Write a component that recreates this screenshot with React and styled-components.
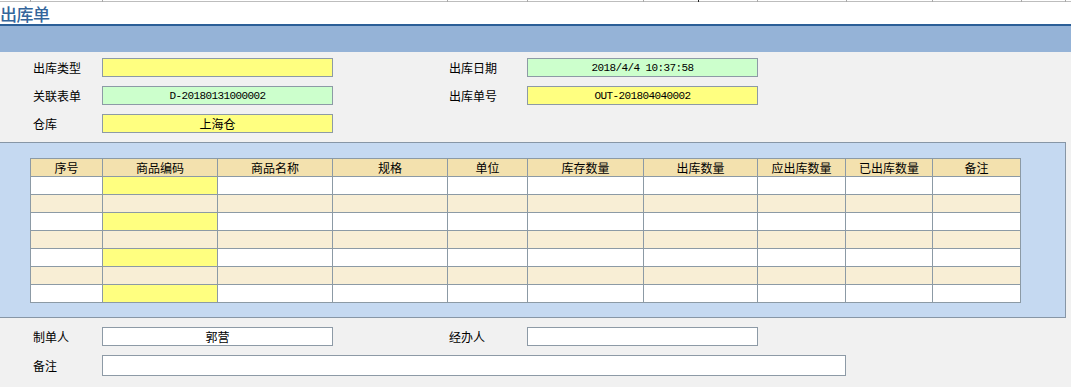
import React from "react";
import styled, { createGlobalStyle } from "styled-components";

const GlobalStyle = createGlobalStyle`
    body {
        margin: 0;
        background: #f1f1f1;
        font-family: "Noto Sans CJK SC", "Liberation Sans", sans-serif;
        font-size: 12px;
        color: #000;
    }
`;

const Page = styled.div`
    width: 1071px;
    height: 387px;
    overflow: hidden;
    background: #f1f1f1;
`;

const Header = styled.div`
    background: #fff;
    border-bottom: 2px solid #2b5f97;
`;

const TopStrip = styled.div`
    position: relative;
    height: 1px;
    border-bottom: 1px solid #bdbdbd;
`;

const Tick = styled.span`
    position: absolute;
    top: 0;
    width: 1px;
    height: 2px;
    background: ${(p) => (p.$dark ? "#222" : "#a8a8a8")};
`;

const Title = styled.h1`
    margin: 0;
    height: 22px;
    line-height: 23px;
    font-size: 17px;
    font-weight: 500;
    color: #34659b;
    letter-spacing: -0.5px;
`;

const Band = styled.div`
    height: 26px;
    background: #95b3d7;
`;

const Form = styled.div`
    display: grid;
    grid-template-columns: 69px 231px 116px 78px 231px;
    row-gap: 9px;
    align-items: center;
    padding: ${(p) => p.$pad};
`;

const Label = styled.div`
    font-size: 12px;
    line-height: 14px;
    grid-column: ${(p) => p.$col || "auto"};
`;

const Field = styled.div`
    box-sizing: border-box;
    height: ${(p) => p.$h || 19}px;
    width: ${(p) => (p.$w ? `${p.$w}px` : "auto")};
    grid-column: ${(p) => p.$span || "auto"};
    border: 1px solid #8d9aa6;
    background: ${(p) => p.$bg || "#fff"};
    display: flex;
    align-items: center;
    justify-content: center;
    font-size: 12px;
`;

const Mono = styled.span`
    font-family: "Liberation Mono", monospace;
    font-size: 11px;
    letter-spacing: -0.6px;
`;

const Panel = styled.div`
    margin: 9px 5px 9px 0;
    border: 1px solid #8796a6;
    border-left: none;
    background: #c5d9f1;
    padding: 15px 0 14px 30px;
`;

const widths = [72, 115, 115, 115, 80, 116, 114, 88, 87, 88];

const Grid = styled.div`
    width: 991px;
    border-top: 1px solid #8c9aa5;
    border-left: 1px solid #8c9aa5;
    box-sizing: border-box;
`;

const Row = styled.div`
    display: grid;
    grid-template-columns: ${widths.map((w) => `${w}px`).join(" ")};
`;

const Cell = styled.div`
    box-sizing: border-box;
    height: 18px;
    border-right: 1px solid #8c9aa5;
    border-bottom: 1px solid #8c9aa5;
    background: ${(p) => p.$bg};
    text-align: center;
    font-size: 12px;
    line-height: 17px;
`;

const heads = ["序号", "商品编码", "商品名称", "规格", "单位", "库存数量", "出库数量", "应出库数量", "已出库数量", "备注"];
const ticks = [30, 102, 447, 527, 643, 757, 846, 932, 1021, 1065];

export default function App() {
    const rows = [0, 1, 2, 3, 4, 5, 6];
    return (
        <Page>
            <GlobalStyle />
            <Header>
                <TopStrip>
                    {ticks.map((x) => (
                        <Tick key={x} style={{ left: x }} />
                    ))}
                    <Tick $dark style={{ left: 698 }} />
                </TopStrip>
                <Title>出库单</Title>
            </Header>
            <Band />

            <Form $pad="6px 0 0 33px">
                <Label>出库类型</Label>
                <Field $bg="#ffff80" />
                <Label $col="4">出库日期</Label>
                <Field $bg="#ccffcc">
                    <Mono>2018/4/4 10:37:58</Mono>
                </Field>

                <Label>关联表单</Label>
                <Field $bg="#ccffcc">
                    <Mono>D-20180131000002</Mono>
                </Field>
                <Label $col="4">出库单号</Label>
                <Field $bg="#ffff80">
                    <Mono>OUT-201804040002</Mono>
                </Field>

                <Label>仓库</Label>
                <Field $bg="#ffff80">上海仓</Field>
            </Form>

            <Panel>
                <Grid>
                    <Row>
                        {heads.map((h) => (
                            <Cell key={h} $bg="#f3e1ae">
                                {h}
                            </Cell>
                        ))}
                    </Row>
                    {rows.map((r) => (
                        <Row key={r}>
                            {heads.map((h, i) => {
                                let bg = r % 2 ? "#f8eed5" : "#fff";
                                if (i === 1 && r % 2 === 0) bg = "#ffff80";
                                return <Cell key={h} $bg={bg} />;
                            })}
                        </Row>
                    ))}
                </Grid>
            </Panel>

            <Form $pad="0 0 0 33px">
                <Label>制单人</Label>
                <Field>郭营</Field>
                <Label $col="4">经办人</Label>
                <Field />

                <Label>备注</Label>
                <Field $h={21} $w={744} $span="2 / 6" />
            </Form>
        </Page>
    );
}
